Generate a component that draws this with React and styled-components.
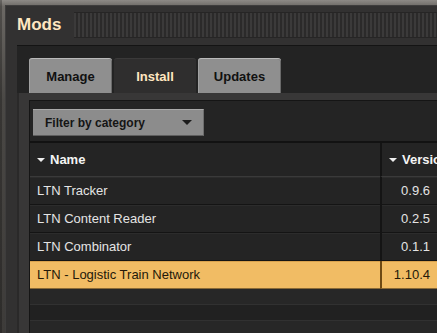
import React from 'react';
import styled, { createGlobalStyle } from 'styled-components';

const GlobalStyle = createGlobalStyle`
  html, body {
    margin: 0;
    padding: 0;
    width: 437px;
    height: 333px;
    overflow: hidden;
  }
  body {
    font-family: "Liberation Sans", Arial, sans-serif;
    background:
      linear-gradient(90deg, rgba(0,0,0,0.25) 0 2px, transparent 2px 4px),
      linear-gradient(180deg, #8d8a86 0%, #6b6864 2%, #4a4845 30%, #3d3b39 100%);
  }
`;

const mods = [
  { name: 'LTN Tracker', version: '0.9.6' },
  { name: 'LTN Content Reader', version: '0.2.5' },
  { name: 'LTN Combinator', version: '0.1.1' },
  { name: 'LTN - Logistic Train Network', version: '1.10.4', selected: true },
];

export default function App() {
  return (
    <>
      <GlobalStyle />
      <Window>
        <TitleBar>
          <Title>Mods</Title>
          <DragArea />
        </TitleBar>
        <InnerPanel>
          <Tabs>
            <Tab>Manage</Tab>
            <Tab active>Install</Tab>
            <Tab>Updates</Tab>
          </Tabs>
          <TabPane>
            <Content>
              <FilterButton>
                Filter by category
                <DownArrow />
              </FilterButton>
              <Table>
                <HeaderCell>
                  <SortArrow />
                  Name
                </HeaderCell>
                <HeaderCell version>
                  <SortArrow />
                  Version
                </HeaderCell>
                {mods.map((mod) => (
                  <React.Fragment key={mod.name}>
                    <Cell selected={mod.selected}>{mod.name}</Cell>
                    <Cell selected={mod.selected} version>{mod.version}</Cell>
                  </React.Fragment>
                ))}
                {[0, 1, 2].map((i) => (
                  <EmptyRow key={i} odd={i % 2 === 1} />
                ))}
              </Table>
            </Content>
          </TabPane>
        </InnerPanel>
      </Window>
    </>
  );
}

const Window = styled.div`
  margin: 5px 0 0 5px;
  width: 432px;
  height: 340px;
  background: #323131;
  box-shadow: inset 1px 1px 0 #3e3d3d;
  display: flex;
  flex-direction: column;
`;

const TitleBar = styled.div`
  display: flex;
  align-items: center;
  height: 25px;
  margin: 7px 0 8px 12px;
`;

const Title = styled.h1`
  margin: 0 13px 0 0;
  font-size: 17px;
  font-weight: 700;
  color: #ffe6c0;
  line-height: 25px;
`;

const DragArea = styled.div`
  flex: 1;
  height: 24px;
  margin-top: 1px;
  background: repeating-linear-gradient(90deg, #3b3a3a 0 2px, #2b2a2a 2px 4px);
  border-top: 1px solid #262525;
  border-bottom: 1px solid #262525;
`;

const InnerPanel = styled.div`
  flex: 1;
  margin-left: 12px;
  background: #232323;
  border-top: 1px solid #141414;
  display: flex;
  flex-direction: column;
`;

const Tabs = styled.div`
  display: flex;
  gap: 2px;
  padding: 12px 0 0 12px;
`;

const Tab = styled.div`
  width: 83px;
  height: 35px;
  box-sizing: border-box;
  display: flex;
  align-items: center;
  justify-content: center;
  font-size: 13px;
  font-weight: 700;
  border-radius: 3px 3px 0 0;
  color: ${(p) => (p.active ? '#ffe6c0' : '#111')};
  background: ${(p) => (p.active ? '#2f2e2e' : '#8f8f8f')};
  border-top: 1px solid ${(p) => (p.active ? '#3a3939' : '#b9b9b9')};
  box-shadow: ${(p) =>
    p.active ? 'none' : 'inset 1px 0 0 #a2a2a2, inset -1px 0 0 #6a6a6a'};
  &:nth-child(2) {
    width: 82px;
  }
`;

const TabPane = styled.div`
  flex: 1;
  background: #383737;
  border-left: 2px solid #2a2929;
  padding: 7px 0 0 10px;
  display: flex;
`;

const Content = styled.div`
  flex: 1;
  background: #242424;
  border-top: 1px solid #151515;
  border-left: 1px solid #151515;
  padding-top: 8px;
`;

const FilterButton = styled.div`
  margin-left: 3px;
  width: 171px;
  height: 27px;
  box-sizing: border-box;
  display: flex;
  align-items: center;
  justify-content: space-between;
  padding: 0 11px 0 12px;
  background: #8c8c8c;
  border-top: 1px solid #a9a9a9;
  border-bottom: 1px solid #5e5e5e;
  border-right: 1px solid #6e6e6e;
  font-size: 12px;
  font-weight: 700;
  color: #151515;
`;

const DownArrow = styled.span`
  width: 0;
  height: 0;
  border-left: 5px solid transparent;
  border-right: 5px solid transparent;
  border-top: 5px solid #1c1c1c;
`;

const Table = styled.div`
  margin-top: 5px;
  display: grid;
  grid-template-columns: 350px 57px;
  border-top: 2px solid #121212;
`;

const HeaderCell = styled.div`
  height: 34px;
  box-sizing: border-box;
  display: flex;
  align-items: center;
  gap: 5px;
  padding-left: 7px;
  font-size: 13px;
  font-weight: 700;
  color: #f4f4f4;
  white-space: nowrap;
  overflow: hidden;
  border-bottom: 1px solid #3a3a3a;
  border-left: ${(p) => (p.version ? '2px solid #141414' : 'none')};
`;

const SortArrow = styled.span`
  flex: none;
  width: 0;
  height: 0;
  border-left: 4px solid transparent;
  border-right: 4px solid transparent;
  border-top: 4px solid #eeeeee;
`;

const Cell = styled.div`
  height: 28px;
  box-sizing: border-box;
  display: flex;
  align-items: center;
  justify-content: ${(p) => (p.version ? 'flex-end' : 'flex-start')};
  padding: ${(p) => (p.version ? '0 7px 0 0' : '0 0 0 7px')};
  font-size: 13px;
  white-space: nowrap;
  color: ${(p) => (p.selected ? '#24190a' : '#e4e4e4')};
  background: ${(p) => (p.selected ? '#f1bc64' : '#242424')};
  border-bottom: 1px solid ${(p) => (p.selected ? '#8a6a36' : '#141414')};
  box-shadow: inset 0 1px 0 ${(p) => (p.selected ? '#d9a24e' : '#2c2c2c')};
  border-left: ${(p) =>
    p.version ? `2px solid ${p.selected ? '#6e4a14' : '#141414'}` : 'none'};
`;

const EmptyRow = styled.div`
  grid-column: 1 / -1;
  height: 15px;
  background: ${(p) => (p.odd ? '#212121' : '#272727')};
  border-bottom: 1px solid #313131;
`;
